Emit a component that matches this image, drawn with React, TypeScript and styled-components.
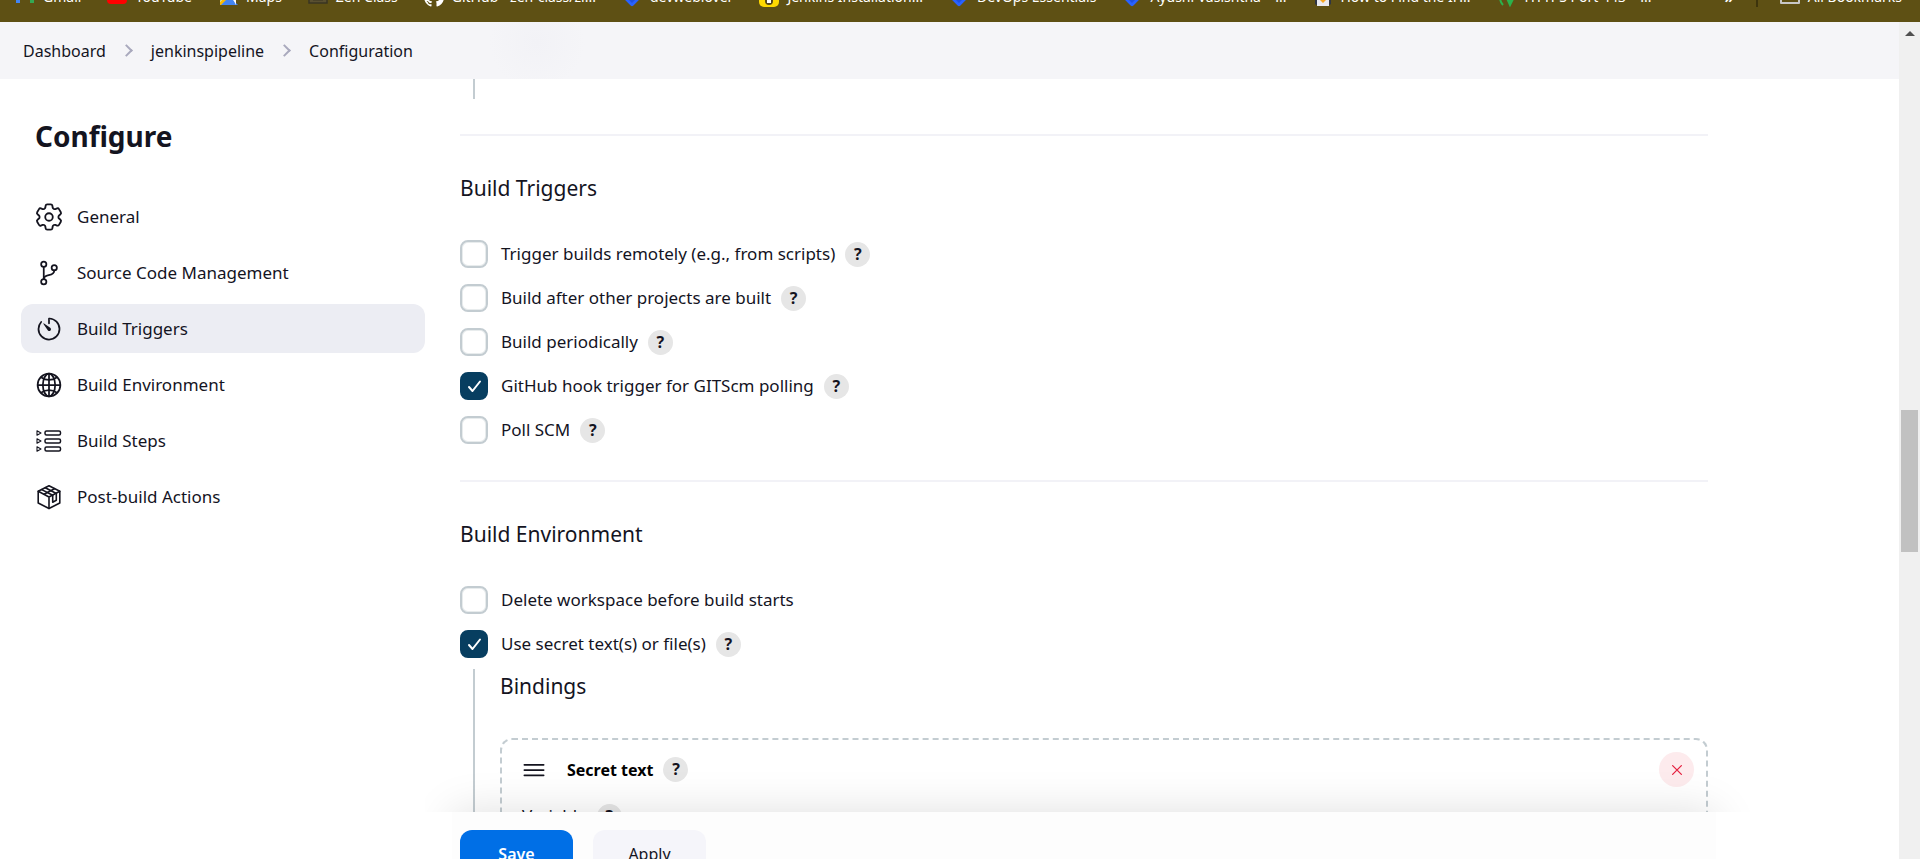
import React, { useState } from "react";
import styled, { createGlobalStyle } from "styled-components";
import {
  IoCloseOutline,
  IoGitBranchOutline,
  IoGlobeOutline,
  IoMenuOutline,
  IoTimerOutline,
} from "react-icons/io5";

const color = {
  text: "#14141f",
  bookmarks: "#5e5014",
  header: "#f5f5f8",
  selected: "#ecedf3",
  divider: "#f2f2f7",
  line: "#c3ccd1",
  checked: "#073e60",
  primary: "#006fe6",
  danger: "#e6203f",
};

const GlobalStyle = createGlobalStyle`
  *, *::before, *::after { box-sizing: border-box; }
  body {
    margin: 0;
    background: #fff;
    color: ${color.text};
    font-family: "Noto Sans", "Open Sans", sans-serif;
    font-size: 17px;
    line-height: 28px;
  }
  h1, h2, h3, ul, ol { margin: 0; padding: 0; font-weight: 400; }
  ul, ol { list-style: none; }
  a { color: inherit; text-decoration: none; }
  button { font: inherit; color: inherit; border: 0; padding: 0; cursor: pointer; }
  svg { display: block; flex: none; }
`;

/* ---------- frame ---------- */

const Window = styled.div`
  display: flex;
  flex-direction: column;
  height: 100vh;
  overflow: hidden;
`;

const Viewport = styled.div`
  flex: 1;
  min-height: 0;
  display: flex;
`;

const Page = styled.div`
  flex: 1;
  min-width: 0;
  display: flex;
  flex-direction: column;
`;

/* ---------- bookmarks ---------- */

const BookmarksBar = styled.nav`
  flex: none;
  display: flex;
  align-items: flex-start;
  height: 22px;
  padding: 0 18px 0 15px;
  overflow: hidden;
  background: ${color.bookmarks};
  color: #fff;
  font-size: 14px;
  line-height: 20px;
  white-space: nowrap;
`;

const BookmarkList = styled.ul`
  flex: 1;
  display: flex;
  gap: 26px;
  margin-top: -13px;
`;

const BookmarkLink = styled.a`
  display: flex;
  gap: 8px;
`;

const BookmarkEnd = styled.div`
  display: flex;
  align-items: center;
  gap: 22px;
  margin-top: -13px;
`;

const Chevrons = styled.button`
  background: none;
  font-size: 16px;
  font-weight: 600;
`;

const Separator = styled.span`
  align-self: flex-end;
  width: 2px;
  height: 18px;
  background: #3d340c;
`;

/* ---------- breadcrumbs ---------- */

const Header = styled.header`
  flex: none;
  height: 57px;
  padding: 0 23px;
  display: flex;
  align-items: center;
  background: radial-gradient(circle at 537px 20px, #f2f2f6 0, ${color.header} 48px);
`;

const Crumbs = styled.ol`
  display: flex;
  align-items: center;
  font-size: 16px;
`;

const Crumb = styled.li`
  display: flex;
  align-items: center;
  & + &::before {
    content: "";
    width: 9px;
    height: 9px;
    margin: 0 20px 0 16px;
    border: solid #a9a9bd;
    border-width: 2px 2px 0 0;
    transform: rotate(45deg);
  }
`;

/* ---------- body ---------- */

const Body = styled.div`
  flex: 1;
  min-height: 0;
  display: flex;
  gap: 35px;
  padding-left: 21px;
`;

const Sidebar = styled.aside`
  flex: 0 0 404px;
  padding-top: 37px;
`;

const PageTitle = styled.h1`
  padding-left: 14px;
  margin-bottom: 36px;
  font-size: 28px;
  line-height: 40px;
  font-weight: 700;
`;

const Tasks = styled.ul`
  display: flex;
  flex-direction: column;
  gap: 7px;
`;

const Task = styled.a<{ $active?: boolean }>`
  display: flex;
  align-items: center;
  gap: 14px;
  height: 49px;
  padding: 0 14px;
  border-radius: 12px;
  background: ${(p) => (p.$active ? color.selected : "transparent")};
`;

const Main = styled.main`
  flex: 1;
  min-width: 0;
  display: flex;
  flex-direction: column;
`;

const FormArea = styled.div`
  position: relative;
  flex: 1;
  min-height: 0;
  margin-left: -35px;
  padding: 0 191px 0 35px;
  overflow: hidden;
  &::after {
    content: "";
    position: absolute;
    left: 27px;
    right: 183px;
    bottom: -60px;
    height: 60px;
    box-shadow: 0 0 44px rgba(0, 0, 0, 0.13);
  }
`;

const Tail = styled.div`
  height: 20px;
  margin: 0 0 35px 13px;
  border-left: 2px solid ${color.line};
`;

const Section = styled.section`
  border-top: 2px solid ${color.divider};
  padding: 38px 0 36px;
`;

const SectionTitle = styled.h2`
  font-size: 21px;
  margin-bottom: 38px;
`;

const Options = styled.div`
  display: flex;
  flex-direction: column;
  gap: 16px;
`;

const OptionRow = styled.div`
  display: flex;
  align-items: center;
  gap: 10px;
`;

const OptionLabel = styled.label`
  display: flex;
  align-items: center;
  gap: 13px;
  cursor: pointer;
`;

const Tick = styled.span`
  display: grid;
  width: 28px;
  height: 28px;
  > * {
    grid-area: 1 / 1;
  }
  svg {
    pointer-events: none;
    z-index: 1;
  }
`;

const Checkbox = styled.input`
  appearance: none;
  margin: 0;
  width: 28px;
  height: 28px;
  border: 2px solid ${color.line};
  border-radius: 8px;
  background: #fff;
  box-shadow: inset 0 0 0 1px #e8eced;
  &:checked {
    border-color: ${color.checked};
    background: ${color.checked};
    box-shadow: none;
  }
`;

const HelpButton = styled.button`
  width: 25px;
  height: 25px;
  border-radius: 50%;
  background: #e6e6e6;
  font-size: 16px;
  font-weight: 700;
  line-height: 25px;
  text-align: center;
`;

const Nested = styled.div`
  margin: 11px 0 0 13px;
  padding: 3px 0 0 25px;
  border-left: 2px solid ${color.line};
`;

const Chunk = styled.div`
  padding: 12px 12px 24px 18px;
  border: 2px dashed ${color.line};
  border-radius: 12px;
`;

const ChunkHeader = styled.div`
  display: flex;
  align-items: center;
  height: 35px;
  margin-bottom: 15px;
`;

const ChunkTitle = styled.h3`
  margin: 0 10px 0 19px;
  font-size: 16px;
  font-weight: 700;
  color: #000;
`;

const DeleteButton = styled.button`
  display: grid;
  place-items: center;
  width: 35px;
  height: 35px;
  margin-left: auto;
  border-radius: 50%;
  background: #fdebed;
  color: ${color.danger};
`;

const Field = styled.div`
  display: grid;
  grid-template-columns: auto 1fr;
  align-items: center;
  gap: 10px;
  padding: 0 2px;
`;

const TextInput = styled.input`
  grid-column: 1 / -1;
  height: 40px;
  padding: 0 12px;
  border: 2px solid ${color.line};
  border-radius: 8px;
  font: inherit;
`;

/* ---------- save bar ---------- */

const SaveBar = styled.footer`
  flex: none;
  display: flex;
  align-items: flex-start;
  gap: 20px;
  height: 47px;
  margin: 0 183px 0 -8px;
  padding: 18px 8px 0;
  overflow: hidden;
  background: #fdfdfd;
`;

const BarButton = styled.button<{ $primary?: boolean }>`
  flex: none;
  width: 113px;
  height: 48px;
  border-radius: 12px;
  font-size: 16px;
  font-weight: ${(p) => (p.$primary ? 600 : 400)};
  color: ${(p) => (p.$primary ? "#fff" : color.text)};
  background: ${(p) => (p.$primary ? color.primary : "#f5f5fa")};
`;

/* ---------- scrollbar ---------- */

const ScrollTrack = styled.div`
  flex: 0 0 21px;
  display: flex;
  flex-direction: column;
  align-items: center;
  background: #f0f0f0;
`;

const ScrollArrow = styled.span`
  margin: 9px 0 3px;
  border: 5px solid transparent;
  border-top: 0;
  border-bottom-color: #505050;
`;

const ScrollSpace = styled.span<{ $share: number }>`
  flex: ${(p) => p.$share};
`;

const ScrollThumb = styled.span`
  flex: 142;
  width: 17px;
  background: #c1c1c1;
`;

/* ---------- icons ---------- */

const DiamondMark = () => (
  <svg width="20" height="20" viewBox="0 0 20 20" aria-hidden="true">
    <rect x="3" y="3" width="14" height="14" rx="2" transform="rotate(45 10 10)" fill="#2962ff" />
    <path d="M10 10l3 3-3 3-3-3z" fill="#1d4fe0" />
  </svg>
);

const GmailMark = () => (
  <svg width="20" height="20" viewBox="0 0 20 20" aria-hidden="true">
    <path d="M1 4h4v12H1z" fill="#4285f4" />
    <path d="M15 4h4v12h-4z" fill="#34a853" />
    <path d="M1 4l9 6 9-6v3l-9 6-9-6z" fill="#ea4335" />
  </svg>
);

const YouTubeMark = () => (
  <svg width="20" height="20" viewBox="0 0 20 20" aria-hidden="true">
    <rect y="3" width="20" height="14" rx="4" fill="#f00" />
    <path d="M8 7l5 3-5 3z" fill="#fff" />
  </svg>
);

const MapsMark = () => (
  <svg width="20" height="20" viewBox="0 0 20 20" aria-hidden="true">
    <path d="M2 2h16v16H2z" fill="#e8eaed" />
    <path d="M2 2h9L2 14z" fill="#34a853" />
    <path d="M2 18l9-9 9 9z" fill="#4285f4" />
    <path d="M2 15L14 3l2 2L3 18H2z" fill="#fbbc04" />
    <path d="M13 8l5 6v4z" fill="#fff" />
  </svg>
);

const ZenMark = () => (
  <svg width="20" height="20" viewBox="0 0 20 20" aria-hidden="true">
    <rect x="1" y="3" width="18" height="13" fill="#5a5030" stroke="#3a3422" strokeWidth="1.5" />
    <path d="M5 13h10" stroke="#3a3422" />
  </svg>
);

const GitHubMark = () => (
  <svg width="20" height="20" viewBox="0 0 16 16" fill="#fff" aria-hidden="true">
    <path d="M8 0C3.58 0 0 3.58 0 8c0 3.54 2.29 6.53 5.47 7.59.4.07.55-.17.55-.38 0-.19-.01-.82-.01-1.49-2.01.37-2.53-.49-2.69-.94-.09-.23-.48-.94-.82-1.13-.28-.15-.68-.52-.01-.53.63-.01 1.08.58 1.23.82.72 1.21 1.87.87 2.33.66.07-.52.28-.87.51-1.07-1.78-.2-3.64-.89-3.64-3.95 0-.87.31-1.59.82-2.15-.08-.2-.36-1.02.08-2.12 0 0 .67-.21 2.2.82.64-.18 1.32-.27 2-.27s1.36.09 2 .27c1.53-1.04 2.2-.82 2.2-.82.44 1.1.16 1.92.08 2.12.51.56.82 1.27.82 2.15 0 3.07-1.87 3.75-3.65 3.95.29.25.54.73.54 1.48 0 1.07-.01 1.93-.01 2.2 0 .21.15.46.55.38A8.01 8.01 0 0016 8c0-4.42-3.58-8-8-8z" />
  </svg>
);

const JenkinsMark = () => (
  <svg width="20" height="20" viewBox="0 0 20 20" aria-hidden="true">
    <rect width="20" height="20" rx="5" fill="#ffd900" />
    <path d="M6 6h8v8a4 4 0 01-8 0z" fill="#54461a" />
    <path d="M8 8h4v8H8z" fill="#fff" />
  </svg>
);

const PenguinMark = () => (
  <svg width="20" height="20" viewBox="0 0 20 20" aria-hidden="true">
    <path d="M2 4h16v13l-3 2H5l-3-2z" fill="#2f3542" />
    <path d="M4 10h12v9H4z" fill="#e9e9ee" />
    <path d="M6 12h8l-4 4z" fill="#f6a623" />
  </svg>
);

const LeafMark = () => (
  <svg width="20" height="20" viewBox="0 0 20 20" fill="none" aria-hidden="true">
    <path d="M3 10c0 4 1 6 3 8" stroke="#2bb24c" strokeWidth="2" />
    <path d="M9 9l4 6 4-5-4 8z" fill="#2bb24c" stroke="#2bb24c" strokeWidth="2" />
  </svg>
);

const FolderMark = () => (
  <svg width="20" height="20" viewBox="0 0 20 20" fill="none" aria-hidden="true">
    <path d="M1 3h7l2 2h9v11H1z" stroke="#c7c7c7" strokeWidth="2" strokeLinejoin="round" />
  </svg>
);

const GearIcon = () => (
  <svg width="28" height="28" viewBox="2 2 20 20" fill="none" stroke="currentColor" strokeWidth="1.3" strokeLinejoin="round" aria-hidden="true">
    <path d="M9.594 3.94c.09-.542.56-.94 1.11-.94h2.593c.55 0 1.02.398 1.11.94l.213 1.281c.063.374.313.686.645.87.074.04.147.083.22.127.325.196.72.257 1.075.124l1.217-.456a1.125 1.125 0 0 1 1.37.49l1.296 2.247a1.125 1.125 0 0 1-.26 1.431l-1.003.827c-.293.241-.438.613-.43.992a7.723 7.723 0 0 1 0 .255c-.008.378.137.75.43.991l1.004.827c.424.35.534.955.26 1.43l-1.298 2.247a1.125 1.125 0 0 1-1.369.491l-1.217-.456c-.355-.133-.75-.072-1.076.124a6.47 6.47 0 0 1-.22.128c-.331.183-.581.495-.644.869l-.213 1.281c-.09.543-.56.94-1.11.94h-2.594c-.55 0-1.019-.398-1.11-.94l-.213-1.281c-.062-.374-.312-.686-.644-.87a6.52 6.52 0 0 1-.22-.127c-.325-.196-.72-.257-1.076-.124l-1.217.456a1.125 1.125 0 0 1-1.369-.49l-1.297-2.247a1.125 1.125 0 0 1 .26-1.431l1.004-.827c.292-.24.437-.613.43-.991a6.932 6.932 0 0 1 0-.255c.007-.38-.138-.751-.43-.992l-1.004-.827a1.125 1.125 0 0 1-.26-1.43l1.297-2.247a1.125 1.125 0 0 1 1.37-.491l1.216.456c.356.133.751.072 1.076-.124.072-.044.146-.086.22-.128.332-.183.582-.495.644-.869l.214-1.28Z" />
    <circle cx="12" cy="12" r="2.7" />
  </svg>
);

const StepsIcon = () => (
  <svg width="28" height="28" viewBox="0 0 28 28" fill="none" stroke="currentColor" strokeLinejoin="round" aria-hidden="true">
    {[6, 14, 22].map((y) => (
      <g key={y}>
        <path d={`M2 ${y - 2.2}v4.4l4-2.2z`} strokeWidth="1.1" />
        <rect x="10" y={y - 2} width="15.5" height="4" rx="1.5" strokeWidth="1.5" />
      </g>
    ))}
  </svg>
);

const PackageIcon = () => (
  <svg width="28" height="28" viewBox="0 0 28 28" fill="none" stroke="currentColor" strokeWidth="1.6" strokeLinejoin="round" strokeLinecap="round" aria-hidden="true">
    <path d="M14 2.8l10.800 5.500v11.700L14 25.500 3.200 20V8.300z" />
    <path d="M3.200 8.300L14 14l10.800-5.700M14 14v11.500" />
    <path d="M6.700 6.600l11 5.600v7l3.600-1.900v-6.800L10.300 4.700" />
    <path d="M9 11.200l10.500-5.500" />
  </svg>
);

const CheckMark = () => (
  <svg width="28" height="28" viewBox="0 0 28 28" fill="none" stroke="#fff" strokeWidth="2" strokeLinecap="round" strokeLinejoin="round" aria-hidden="true">
    <path d="M9 15l3.500 4L20 9.500" />
  </svg>
);

/* ---------- data ---------- */

const bookmarks = [
  { label: "Gmail", Icon: GmailMark },
  { label: "YouTube", Icon: YouTubeMark },
  { label: "Maps", Icon: MapsMark },
  { label: "Zen Class", Icon: ZenMark },
  { label: "GitHub - zen-class/zi...", Icon: GitHubMark },
  { label: "devweblover", Icon: DiamondMark },
  { label: "Jenkins Installation...", Icon: JenkinsMark },
  { label: "DevOps Essentials", Icon: DiamondMark },
  { label: "Ayushi Vasishtha – ...", Icon: DiamondMark },
  { label: "How to Find the IP...", Icon: PenguinMark },
  { label: "HTTPS Port 443 – ...", Icon: LeafMark },
];

const tasks = [
  { label: "General", icon: <GearIcon /> },
  { label: "Source Code Management", icon: <IoGitBranchOutline size={28} /> },
  { label: "Build Triggers", icon: <IoTimerOutline size={28} />, active: true },
  { label: "Build Environment", icon: <IoGlobeOutline size={28} /> },
  { label: "Build Steps", icon: <StepsIcon /> },
  { label: "Post-build Actions", icon: <PackageIcon /> },
];

const Help = ({ topic }: { topic: string }) => (
  <HelpButton type="button" aria-label={`Help for feature: ${topic}`}>
    ?
  </HelpButton>
);

type OptionProps = { label: string; defaultChecked?: boolean; help?: boolean };

const Option = ({ label, defaultChecked = false, help = true }: OptionProps) => {
  const [checked, setChecked] = useState(defaultChecked);
  return (
    <OptionRow>
      <OptionLabel>
        <Tick>
          <Checkbox type="checkbox" checked={checked} onChange={(e) => setChecked(e.target.checked)} />
          {checked && <CheckMark />}
        </Tick>
        {label}
      </OptionLabel>
      {help && <Help topic={label} />}
    </OptionRow>
  );
};

export default function App() {
  return (
    <Window>
      <GlobalStyle />
      <BookmarksBar aria-label="Bookmarks">
        <BookmarkList>
          {bookmarks.map(({ label, Icon }) => (
            <li key={label}>
              <BookmarkLink href="#">
                <Icon />
                {label}
              </BookmarkLink>
            </li>
          ))}
        </BookmarkList>
        <BookmarkEnd>
          <Chevrons type="button">»</Chevrons>
          <Separator />
          <BookmarkLink href="#">
            <FolderMark />
            All Bookmarks
          </BookmarkLink>
        </BookmarkEnd>
      </BookmarksBar>

      <Viewport>
        <Page>
          <Header>
            <Crumbs>
              <Crumb><a href="#">Dashboard</a></Crumb>
              <Crumb><a href="#">jenkinspipeline</a></Crumb>
              <Crumb><a href="#">Configuration</a></Crumb>
            </Crumbs>
          </Header>

          <Body>
            <Sidebar>
              <PageTitle>Configure</PageTitle>
              <Tasks>
                {tasks.map((t) => (
                  <li key={t.label}>
                    <Task href="#" $active={t.active}>
                      {t.icon}
                      {t.label}
                    </Task>
                  </li>
                ))}
              </Tasks>
            </Sidebar>

            <Main>
              <FormArea>
                <Tail />
                <Section>
                  <SectionTitle>Build Triggers</SectionTitle>
                  <Options>
                    <Option label="Trigger builds remotely (e.g., from scripts)" />
                    <Option label="Build after other projects are built" />
                    <Option label="Build periodically" />
                    <Option label="GitHub hook trigger for GITScm polling" defaultChecked />
                    <Option label="Poll SCM" />
                  </Options>
                </Section>
                <Section>
                  <SectionTitle>Build Environment</SectionTitle>
                  <Options>
                    <Option label="Delete workspace before build starts" help={false} />
                    <Option label="Use secret text(s) or file(s)" defaultChecked />
                  </Options>
                  <Nested>
                    <SectionTitle as="h3">Bindings</SectionTitle>
                    <Chunk>
                      <ChunkHeader>
                        <IoMenuOutline size={28} />
                        <ChunkTitle>Secret text</ChunkTitle>
                        <Help topic="Secret text" />
                        <DeleteButton type="button" aria-label="Delete">
                          <IoCloseOutline size={20} />
                        </DeleteButton>
                      </ChunkHeader>
                      <Field>
                        <label htmlFor="variable">Variable</label>
                        <Help topic="Variable" />
                        <TextInput id="variable" type="text" />
                      </Field>
                    </Chunk>
                  </Nested>
                </Section>
              </FormArea>
              <SaveBar>
                <BarButton type="submit" $primary>Save</BarButton>
                <BarButton type="button">Apply</BarButton>
              </SaveBar>
            </Main>
          </Body>
        </Page>

        <ScrollTrack aria-hidden="true">
          <ScrollArrow />
          <ScrollSpace $share={371} />
          <ScrollThumb />
          <ScrollSpace $share={307} />
        </ScrollTrack>
      </Viewport>
    </Window>
  );
}
